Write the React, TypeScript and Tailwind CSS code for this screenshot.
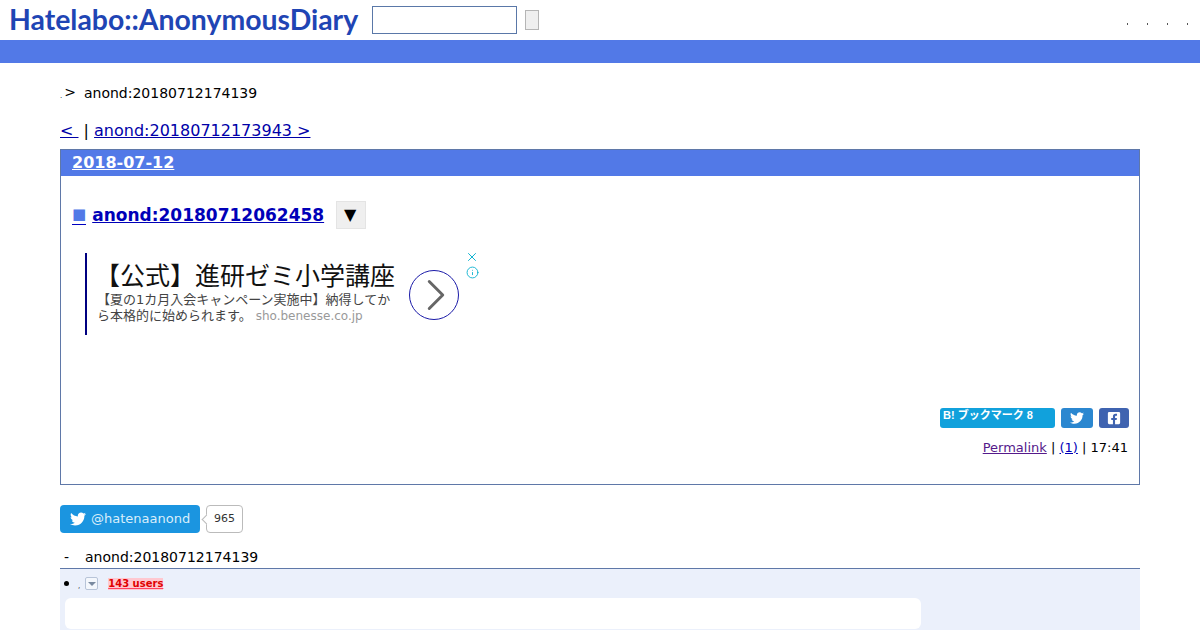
import { ChevronRight, Info, X } from "lucide-react";
import { FaFacebookSquare, FaTwitter } from "react-icons/fa";

const sans = "font-['DejaVu_Sans','Noto_Sans_CJK_JP',sans-serif]";

function AdBlock() {
  return (
    <div className="ml-[24px] mt-[24px] flex h-[82px] w-[400px] border-l-2 border-[#000080] pl-[10px]">
      <div className="w-[302px] shrink-0">
        <p className="mt-[3px] -ml-[2px] whitespace-nowrap font-['Noto_Sans_CJK_JP',sans-serif] text-[25px] leading-[36px] text-[#111]">【公式】進研ゼミ小学講座</p>
        <p className="w-[296px] font-['DejaVu_Sans','Noto_Sans_CJK_JP',sans-serif] text-[13px] leading-[16px] text-[#444]">
          【夏の1カ月入会キャンペーン実施中】納得してから本格的に始められます。
          <span className="ml-[4px] text-[12px] text-[#999]">sho.benesse.co.jp</span>
        </p>
      </div>
      <div className="ml-[10px] mt-[17px] flex h-[50px] w-[50px] shrink-0 items-center justify-center rounded-full border border-[#1a1aa8]">
        <ChevronRight className="ml-[3px] h-[54px] w-[54px] shrink-0 text-[#666]" strokeWidth={1.3} />
      </div>
      <div className="-mt-[3px] ml-[6px] flex flex-col items-center gap-[2px] text-[#00aecd]">
        <X className="h-[14px] w-[14px]" strokeWidth={1.6} />
        <Info className="h-[13px] w-[13px]" strokeWidth={1.6} />
      </div>
    </div>
  );
}

export default function App() {
  return (
    <div className={`h-[630px] w-[1200px] overflow-hidden bg-white text-sm text-black ${sans}`}>
      <header className="flex h-10 items-center">
        <a className="ml-[9px] -mt-px w-[349px] whitespace-nowrap font-['Lato',sans-serif] text-[28.4px] font-bold leading-none text-[#1f45b4]">
          Hatelabo::AnonymousDiary
        </a>
        <input className="ml-[14px] h-7 w-[145px] border border-[#5a78a8] bg-white" />
        <button className="ml-2 h-5 w-[14px] border border-[#b5b5b5] bg-[#efefef]" />
        <div className="ml-auto mr-[12px] mt-[8px] flex gap-[19px]">
          {[0, 1, 2, 3].map((i) => (
            <span key={i} className="h-[2px] w-px bg-[#555]" />
          ))}
        </div>
      </header>
      <div className="h-[23px] bg-[#5279e7]" />

      <main className="mx-[60px]">
        <div className="mt-[21px] flex h-[18px] items-center leading-[18px]">
          <span className="mt-[6px] text-[7px] leading-none">.</span>
          <span className="ml-[2px] -mt-[2px]">&gt;</span>
          <span className="ml-[8px]">anond:20180712174139</span>
        </div>
        <div className="mt-[19px] h-[20px] text-base leading-[20px]">
          <a className="text-[#0000a8] underline">&lt;&nbsp;</a>
          <span> | </span>
          <a className="text-[#0000a8] underline">anond:20180712173943 &gt;</a>
        </div>

        <section className="mt-[8px] h-[336px] border border-[#5f78a8]">
          <h2 className="h-[26px] bg-[#5279e7] pl-[11px] text-base font-bold leading-[25px] text-white">
            <a className="underline">2018-07-12</a>
          </h2>
          <div className="ml-[11px] mt-[25px] flex h-7 items-center">
            <span className="mr-[6px] border-b border-[#0000c0] pb-px text-[15px] leading-[18px] text-[#5279e7]">■</span>
            <a className="text-[17px] font-bold leading-7 text-[#0000b8] underline">anond:20180712062458</a>
            <span className="ml-3 flex h-7 w-[30px] items-center justify-center border border-[#e4e4e4] bg-[#efefef] pr-[2px] text-[16px] text-black">▼</span>
          </div>
          <AdBlock />
          <div className="mr-[10px] mt-[73px] flex justify-end gap-[6px]">
            <a className="flex h-5 w-[115px] items-start rounded-[3px] bg-[#11a1dc] pl-[3px] font-['Liberation_Sans','Noto_Sans_CJK_JP',sans-serif] text-[11px] font-bold leading-[15px] text-white">
              B! ブックマーク 8
            </a>
            <a className="flex h-5 w-8 items-center justify-center rounded-[3px] bg-[#2b87d0] text-white">
              <FaTwitter className="h-[14px] w-[14px]" />
            </a>
            <a className="flex h-5 w-[30px] items-center justify-center rounded-[3px] bg-[#3f63b0] text-white">
              <FaFacebookSquare className="h-[14px] w-[14px]" />
            </a>
          </div>
          <p className="mr-[11px] mt-[10px] text-right text-[13px] leading-[20px]">
            <a className="text-[#551a8b] underline">Permalink</a> | <a className="text-[#0000b8] underline">(1)</a> | 17:41
          </p>
        </section>

        <div className="mt-5 flex h-7 items-center">
          <a className="flex h-7 w-[140px] items-center rounded-[4px] bg-[#1b95e0] pl-[10px] text-[13px] text-white">
            <FaTwitter className="mr-[5px] h-4 w-4" />
            <span className="text-[#d9eefb]">@hatenaanond</span>
          </a>
          <span className="relative ml-[6px] flex h-7 w-[37px] items-center justify-center rounded-[4px] border border-[#bbb] text-[11px] text-[#333]">
            <span className="absolute -left-[4px] top-[10px] h-[7px] w-[7px] rotate-45 border-b border-l border-[#bbb] bg-white" />
            965
          </span>
        </div>

        <div className="mt-[14px] flex h-5 items-center leading-5">
          <span className="ml-[4px] w-[21px]">-</span>
          <span>anond:20180712174139</span>
        </div>

        <div className="mt-[1px] h-[62px] border-t border-[#5f78a8] bg-[#ebf0fb] pl-[5px]">
          <div className="flex h-[29px] items-center">
            <span className="ml-[-1px] h-[5px] w-[5px] rounded-full bg-black" />
            <span className="ml-[9px] mt-[6px] text-[7px] leading-none">,</span>
            <span className="ml-[5px] flex h-[13px] w-[13px] items-center justify-center rounded-[2px] border border-[#b8c4d8] bg-[#f4f7fc]">
              <span className="h-0 w-0 border-x-[4px] border-t-[4px] border-x-transparent border-t-[#7a8aa0]" />
            </span>
            <a className="ml-[10px] mt-[1px] bg-[#ffc8d0] text-[10px] font-bold leading-3 text-[#e00000] underline decoration-[#ff4060]">143 users</a>
          </div>
          <div className="h-[31px] w-[856px] rounded-[6px] bg-white" />
        </div>
      </main>
    </div>
  );
}
